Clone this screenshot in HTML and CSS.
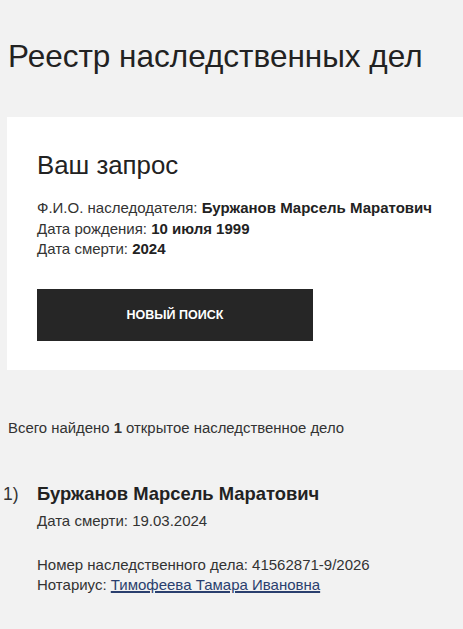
FILE: index.html
```html
<!DOCTYPE html>
<html lang="ru">
<head>
<meta charset="utf-8">
<link rel="stylesheet" href="styles.css">
</head>
<body>
<main class="page">
  <h1 class="title">Реестр наследственных дел</h1>
  <section class="card">
    <h2 class="card-title">Ваш запрос</h2>
    <div class="info">
      <div>Ф.И.О. наследодателя: <b>Буржанов Марсель Маратович</b></div>
      <div>Дата рождения: <b>10 июля 1999</b></div>
      <div>Дата смерти: <b>2024</b></div>
    </div>
    <button class="btn">НОВЫЙ ПОИСК</button>
  </section>
  <p class="summary">Всего найдено <b>1</b> открытое наследственное дело</p>
  <ol class="results">
    <li class="result">
      <span class="num">1)</span>
      <div class="result-body">
        <div class="name">Буржанов Марсель Маратович</div>
        <div class="death">Дата смерти: 19.03.2024</div>
        <div class="meta">
          <div>Номер наследственного дела: 41562871-9/2026</div>
          <div>Нотариус: <a class="link" href="#">Тимофеева Тамара Ивановна</a></div>
        </div>
      </div>
    </li>
  </ol>
</main>
</body>
</html>
```

FILE: styles.css
```css
html, body {
  margin: 0;
  padding: 0;
  background: #f2f2f2;
}
body {
  font-family: "Liberation Sans", Arial, sans-serif;
  color: #222;
}
.page {
  padding: 0 0 0 7px;
  overflow: hidden;
}
.title {
  margin: 0;
  padding: 38px 0 0 1px;
  font-size: 31.5px;
  font-weight: normal;
  line-height: 36px;
  color: #222;
}
.card {
  margin-top: 43px;
  background: #fff;
  padding: 33px 30px 29px 30px;
}
.card-title {
  margin: 0;
  font-size: 25.8px;
  font-weight: normal;
  line-height: 30px;
}
.info {
  margin-top: 18px;
  font-size: 15px;
  line-height: 20.5px;
  color: #333;
}
.info b {
  color: #222;
}
.btn {
  margin-top: 29px;
  display: block;
  width: 276px;
  height: 52px;
  border: 0;
  background: #262626;
  color: #fff;
  font-family: "Liberation Sans", Arial, sans-serif;
  font-weight: bold;
  font-size: 12.5px;
  padding: 0;
}
.summary {
  margin: 48px 0 0 1px;
  font-size: 14.9px;
  line-height: 20px;
  color: #333;
}
.results {
  list-style: none;
  margin: 44px 0 0 0;
  padding: 0;
}
.result {
  display: flex;
}
.num {
  width: 30px;
  margin-left: -4px;
  font-size: 17.5px;
  line-height: 24px;
  color: #333;
}
.result-body {
  margin-left: 4px;
}
.name {
  font-size: 18.4px;
  font-weight: bold;
  line-height: 24px;
}
.death {
  margin-top: 5px;
  font-size: 15px;
  line-height: 20px;
  color: #333;
}
.meta {
  margin-top: 24px;
  font-size: 15px;
  line-height: 20px;
  color: #333;
}
.link {
  color: #2a3f6e;
  text-decoration: underline;
  text-decoration-thickness: 1.5px;
}
```
